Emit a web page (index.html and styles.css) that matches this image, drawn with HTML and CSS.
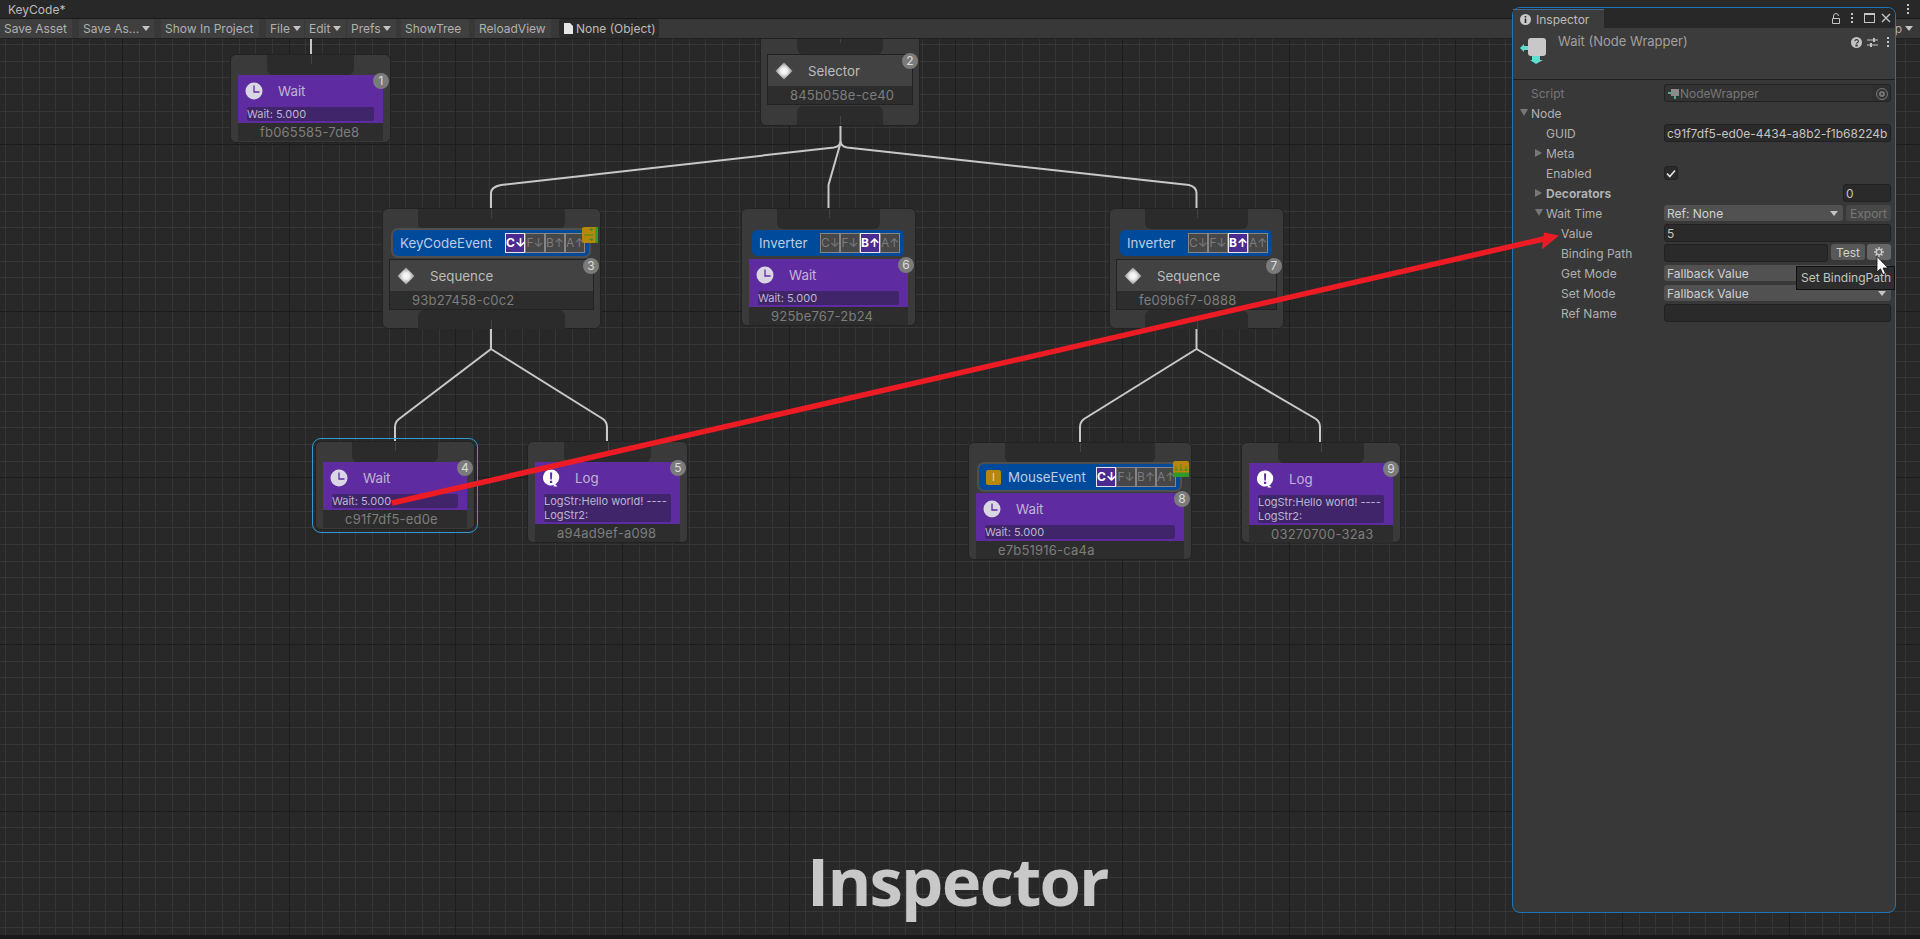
FILE: index.html
```html
<!DOCTYPE html>
<html lang="en">
<head>
    <meta charset="UTF-8">
    <title>KeyCode - Behavior Tree</title>
    <link rel="stylesheet" href="styles.css">
</head>
<body>

    <svg class="defs" xmlns="http://www.w3.org/2000/svg">
        <defs>
            <radialGradient id="diamond-fill">
                <stop offset="0" stop-color="#ffffff"></stop>
                <stop offset=".4" stop-color="#ececec"></stop>
                <stop offset="1" stop-color="#8e8e8e"></stop>
            </radialGradient>
        </defs>
        <symbol id="clock" viewBox="0 0 18 18">
            <circle cx="9" cy="9" r="8.500" fill="#dbd6e4"></circle>
            <path d="M9 3.500V10H14.500" fill="none" stroke="#5e2ca0" stroke-width="1.300"></path>
        </symbol>
        <symbol id="alert" viewBox="0 0 18 18">
            <path d="M9 .5a8 8 0 1 1-1 15.900c-1 0-2-.4-2.800-.9a8 8 0 0 1 3.800-15z M12.500 14.500l3 3h-4z" fill="#fff"></path>
            <path d="M8 3.500h2.200l-.3 7h-1.600z M8 11.800h2.200v2.200h-2.200z" fill="#5e2ca0"></path>
        </symbol>
        <symbol id="diamond" viewBox="0 0 18 18">
            <path d="M9 .5L17.500 9 9 17.500 .5 9z" fill="url(#diamond-fill)"></path>
        </symbol>
        <symbol id="abort-right" viewBox="0 0 16 16">
            <rect width="16" height="16" rx="2" fill="#b8860b"></rect>
            <rect x="13.500" width="2.500" height="16" fill="#2f9a2a"></rect>
            <path d="M7 2.500h4M9 1l2 1.500L9 4M2 8h9M7 12.500h4M9 11l2 1.500L9 14" fill="none" stroke="#3d8f2a" stroke-width="1"></path>
        </symbol>
        <symbol id="abort-down" viewBox="0 0 16 16">
            <rect width="16" height="16" rx="2" fill="#b8860b"></rect>
            <rect y="11.500" width="16" height="4.500" fill="#2f9a2a"></rect>
            <path d="M8 3v7M6.500 8L8 10 9.500 8M3 5v5M1.500 8L3 10 4.500 8M13 5v5M11.500 8L13 10 14.500 8" fill="none" stroke="#3d8f2a" stroke-width="1"></path>
        </symbol>
    </svg>

    <div class="titlebar">
        <span>KeyCode*</span>
        <span class="dots title-dots"><i></i><i></i><i></i></span>
    </div>

    <div class="toolbar">
        <div class="tb-btn save-asset">Save Asset</div>
        <div class="tb-btn save-as">Save As...<span class="caret"></span></div>
        <div class="tb-btn show-project">Show In Project</div>
        <div class="tb-btn file-btn">File<span class="caret"></span></div>
        <div class="tb-btn edit-btn">Edit<span class="caret"></span></div>
        <div class="tb-btn prefs-btn">Prefs<span class="caret"></span></div>
        <div class="tb-btn show-tree">ShowTree</div>
        <div class="tb-btn reload-view">ReloadView</div>
        <div class="tb-object">
            <svg width="9" height="11" viewBox="0 0 9 11"><path d="M0 0H6L9 3V11H0z" fill="#e6e6e6"></path></svg>
            None (Object)
        </div>
        <div class="tb-end">p<span class="caret"></span></div>
    </div>

    <div class="canvas">
        <svg class="wires" xmlns="http://www.w3.org/2000/svg">
            <path d="M311 0V15"></path>
            <path d="M840.500 87V102Q840.500 107 834 108.500L501 146Q491 148 491 154V169"></path>
            <path d="M840.500 102Q840.500 107 847 108.500L1189 146Q1196.500 148 1196.500 154V169"></path>
            <path d="M840.500 104L828.500 146V169"></path>
            <path d="M491 290V310L399 380Q395 383 395 388V402"></path>
            <path d="M491 310L603 380Q607 383 607 388V402"></path>
            <path d="M1196.500 290V310L1084 380Q1080 383 1080 388V403"></path>
            <path d="M1196.500 310L1316 380Q1320 383 1320 388V403"></path>
        </svg>

        <div class="node n1">
            <div class="port"></div>
            <div class="body action">
                <div class="badge">1</div>
                <div class="head"><svg class="ico"><use href="#clock"></use></svg>Wait</div>
                <div class="note">Wait: 5.000</div>
                <div class="guid">fb065585-7de8</div>
            </div>
        </div>

        <div class="node n2">
            <div class="port"></div>
            <div class="body comp">
                <div class="badge">2</div>
                <div class="head"><svg class="ico"><use href="#diamond"></use></svg>Selector</div>
                <div class="guid">845b058e-ce40</div>
            </div>
            <div class="port port-out"></div>
        </div>

        <div class="node n3">
            <div class="port"></div>
            <div class="deco framed">
                <span class="deco-name">KeyCodeEvent</span>
                <div class="keys"><span class="key on">C↓</span><span class="key">F↓</span><span class="key">B↑</span><span class="key">A↑</span></div>
                <svg class="abort"><use href="#abort-right"></use></svg>
            </div>
            <div class="body comp">
                <div class="badge">3</div>
                <div class="head"><svg class="ico"><use href="#diamond"></use></svg>Sequence</div>
                <div class="guid">93b27458-c0c2</div>
            </div>
            <div class="port port-out"></div>
        </div>

        <div class="node n6">
            <div class="port"></div>
            <div class="deco">
                <span class="deco-name">Inverter</span>
                <div class="keys"><span class="key">C↓</span><span class="key">F↓</span><span class="key on">B↑</span><span class="key">A↑</span></div>
            </div>
            <div class="body action">
                <div class="badge">6</div>
                <div class="head"><svg class="ico"><use href="#clock"></use></svg>Wait</div>
                <div class="note">Wait: 5.000</div>
                <div class="guid">925be767-2b24</div>
            </div>
        </div>

        <div class="node n7">
            <div class="port"></div>
            <div class="deco">
                <span class="deco-name">Inverter</span>
                <div class="keys"><span class="key">C↓</span><span class="key">F↓</span><span class="key on">B↑</span><span class="key">A↑</span></div>
            </div>
            <div class="body comp">
                <div class="badge">7</div>
                <div class="head"><svg class="ico"><use href="#diamond"></use></svg>Sequence</div>
                <div class="guid">fe09b6f7-0888</div>
            </div>
            <div class="port port-out"></div>
        </div>

        <div class="node n4">
            <div class="port"></div>
            <div class="body action">
                <div class="badge">4</div>
                <div class="head"><svg class="ico"><use href="#clock"></use></svg>Wait</div>
                <div class="note">Wait: 5.000</div>
                <div class="guid">c91f7df5-ed0e</div>
            </div>
        </div>

        <div class="node n5">
            <div class="port"></div>
            <div class="body action">
                <div class="badge">5</div>
                <div class="head"><svg class="ico"><use href="#alert"></use></svg>Log</div>
                <div class="note">LogStr:Hello world! ----<br>LogStr2:</div>
                <div class="guid">a94ad9ef-a098</div>
            </div>
        </div>

        <div class="node n8">
            <div class="port"></div>
            <div class="deco framed">
                <span class="flag">I</span>
                <span class="deco-name">MouseEvent</span>
                <div class="keys"><span class="key on">C↓</span><span class="key">F↓</span><span class="key">B↑</span><span class="key">A↑</span></div>
                <svg class="abort"><use href="#abort-down"></use></svg>
            </div>
            <div class="body action">
                <div class="badge">8</div>
                <div class="head"><svg class="ico"><use href="#clock"></use></svg>Wait</div>
                <div class="note">Wait: 5.000</div>
                <div class="guid">e7b51916-ca4a</div>
            </div>
        </div>

        <div class="node n9">
            <div class="port"></div>
            <div class="body action">
                <div class="badge">9</div>
                <div class="head"><svg class="ico"><use href="#alert"></use></svg>Log</div>
                <div class="note">LogStr:Hello world! ----<br>LogStr2:</div>
                <div class="guid">03270700-32a3</div>
            </div>
        </div>

        <div class="caption">Inspector</div>
    </div>

    <div class="bottom-strip"></div>

    <div class="inspector">
        <div class="tabs">
            <div class="tab">
                <svg width="11" height="11" viewBox="0 0 11 11"><circle cx="5.500" cy="5.500" r="5.500" fill="#c8c8c8"></circle><path d="M4.700 2h1.600v1.500H4.700zM4.700 4.500h1.600V9H4.700z" fill="#282828"></path></svg>
                Inspector
            </div>
            <div class="tab-tools">
                <svg class="lock-ico" width="10" height="11" viewBox="0 0 10 11"><path d="M1.500 5.500V3a2.500 2.500 0 0 1 5 0M.5 5.500h7v5h-7z" fill="none" stroke="#c4c4c4"></path></svg>
                <span class="dots tab-dots"><i></i><i></i><i></i></span>
                <span class="max-ico"></span>
                <svg width="10" height="10" viewBox="0 0 10 10"><path d="M1 1L9 9M9 1L1 9" stroke="#c4c4c4" stroke-width="1.400"></path></svg>
            </div>
        </div>

        <div class="insp-head">
            <svg class="insp-ico" width="28" height="27" viewBox="0 0 28 27">
                <path d="M0 11L4 7V9H9V13H4V15z" fill="#5fe0cf"></path>
                <path d="M12 19H20V23H23L16 27 10 23H12z" fill="#5fe0cf"></path>
                <rect x="8" y="1" width="18" height="18" rx="3" fill="#c8c8c8"></rect>
            </svg>
            <span class="insp-title">Wait (Node Wrapper)</span>
            <div class="insp-tools">
                <svg width="11" height="11" viewBox="0 0 11 11"><circle cx="5.500" cy="5.500" r="5.500" fill="#c4c4c4"></circle><path d="M3.800 4.200a1.800 1.600 0 1 1 2.500 1.500c-.6.300-.8.500-.8 1.100M5 8h1.100v1H5z" fill="none" stroke="#383838" stroke-width="1.100"></path></svg>
                <svg width="11" height="11" viewBox="0 0 11 11"><path d="M0 3h11M0 8h11" stroke="#c4c4c4"></path><rect x="6" y="1" width="2" height="4" fill="#c4c4c4"></rect><rect x="3" y="6" width="2" height="4" fill="#c4c4c4"></rect></svg>
                <span class="dots head-dots"><i></i><i></i><i></i></span>
            </div>
        </div>

        <div class="rows">
            <div class="row">
                <div class="label lv0 dim">Script</div>
                <div class="field dim script-field">
                    <svg width="11" height="11" viewBox="0 0 11 11"><rect x="3" y="1" width="8" height="7" fill="#8a8a8a"></rect><path d="M0 4h3v2H0zM6 8h2v3H6z" fill="#4fa89a"></path></svg>
                    NodeWrapper
                    <span class="picker"></span>
                </div>
            </div>
            <div class="row">
                <div class="label lv-fold0"><span class="fold open"></span>Node</div>
            </div>
            <div class="row">
                <div class="label lv1">GUID</div>
                <div class="field">c91f7df5-ed0e-4434-a8b2-f1b68224b</div>
            </div>
            <div class="row">
                <div class="label lv-fold1"><span class="fold closed"></span>Meta</div>
            </div>
            <div class="row">
                <div class="label lv1">Enabled</div>
                <div class="check">
                    <svg width="10" height="9" viewBox="0 0 10 9"><path d="M1 4.500L3.800 7.500 9 1.500" fill="none" stroke="#e4e4e4" stroke-width="1.600"></path></svg>
                </div>
            </div>
            <div class="row">
                <div class="label lv-fold1"><span class="fold closed"></span><b>Decorators</b></div>
                <div class="value-end"><div class="field count">0</div></div>
            </div>
            <div class="row">
                <div class="label lv-fold1"><span class="fold open"></span>Wait Time</div>
                <div class="value-split">
                    <div class="drop ref-drop">Ref: None<span class="caret"></span></div>
                    <div class="btn disabled">Export</div>
                </div>
            </div>
            <div class="row">
                <div class="label lv2">Value</div>
                <div class="field">5</div>
            </div>
            <div class="row">
                <div class="label lv2">Binding Path</div>
                <div class="value-split">
                    <div class="field binding"></div>
                    <div class="btn test-btn">Test</div>
                    <div class="btn gear-btn">
                        <svg width="10" height="10" viewBox="0 0 12 12"><circle cx="6" cy="6" r="3.200" fill="none" stroke="#c8c8c8" stroke-width="1.600"></circle><path d="M6 0V2.500M6 9.500V12M0 6H2.500M9.500 6H12M1.800 1.800L3.500 3.500M8.500 8.500L10.200 10.200M1.800 10.200L3.500 8.500M8.500 3.500L10.200 1.800" stroke="#c8c8c8" stroke-width="1.700"></path></svg>
                    </div>
                </div>
            </div>
            <div class="row">
                <div class="label lv2">Get Mode</div>
                <div class="drop">Fallback Value<span class="caret"></span></div>
            </div>
            <div class="row">
                <div class="label lv2">Set Mode</div>
                <div class="drop">Fallback Value<span class="caret"></span></div>
            </div>
            <div class="row">
                <div class="label lv2">Ref Name</div>
                <div class="field"></div>
            </div>
        </div>

        <div class="tooltip">Set BindingPath</div>
    </div>

    <svg class="overlay" xmlns="http://www.w3.org/2000/svg">
        <path class="arrow-line" d="M392 503L1548 238"></path>
        <path class="arrow-head" d="M1559 235.500L1544 232.500 1542 249.500z"></path>
        <path class="cursor" d="M1877 256.500V272L1880.500 268.800 1883 274.500 1885.500 273.300 1883 268H1888z"></path>
    </svg>

</body>
</html>
```

FILE: styles.css
```css
* {
    margin: 0;
    padding: 0;
    box-sizing: border-box;
}

body {
    display: flex;
    flex-direction: column;
    height: 939px;
    overflow: hidden;
    position: relative;
    background: #282828;
    font-family: Inter, "Liberation Sans", sans-serif;
    font-size: 12px;
    color: #b0b0b0;
}

.defs {
    position: absolute;
    width: 0;
    height: 0;
}

/* top bars */
.titlebar {
    height: 19px;
    flex-shrink: 0;
    display: flex;
    align-items: center;
    justify-content: space-between;
    padding: 0 11px 0 8px;
    background: #282828;
    border-bottom: 1px solid #1a1a1a;
    color: #bcbcbc;
}

.toolbar {
    height: 20px;
    flex-shrink: 0;
    display: flex;
    background: #383838;
    border-bottom: 1px solid #1f1f1f;
}

.tb-btn {
    display: flex;
    align-items: center;
    background: #3f3f3f;
    padding-left: 4px;
    white-space: nowrap;
}

.save-asset { width: 72px; }
.save-as { width: 75px; margin-left: 7px; }
.show-project { width: 98px; margin-left: 7px; }
.file-btn { width: 38px; margin-left: 7px; }
.edit-btn { width: 41px; margin-left: 1px; }
.prefs-btn { width: 49px; margin-left: 1px; }
.show-tree { width: 68px; margin-left: 5px; }
.reload-view { width: 76px; margin-left: 6px; }

.tb-object {
    display: flex;
    align-items: center;
    gap: 3px;
    width: 100px;
    height: 19px;
    margin-left: 8px;
    padding-left: 5px;
    background: #2a2a2a;
    border-radius: 3px;
    color: #bcbcbc;
    white-space: nowrap;
}

.tb-end {
    display: flex;
    align-items: center;
    margin-left: auto;
    padding-right: 7px;
}

.caret {
    width: 0;
    height: 0;
    margin-left: 3px;
    border-left: 4px solid transparent;
    border-right: 4px solid transparent;
    border-top: 5px solid #c4c4c4;
}

.dots {
    display: inline-flex;
    flex-direction: column;
    gap: 2px;
}

.dots i {
    width: 2px;
    height: 2px;
    background: #c4c4c4;
}

/* graph canvas */
.canvas {
    flex: 1;
    position: relative;
    overflow: hidden;
    background-color: #282828;
    background-image:
        repeating-linear-gradient(90deg, transparent 0 122px, #1d1d1d 122px 123px, transparent 123px 166.670px),
        repeating-linear-gradient(180deg, transparent 0 105px, #1d1d1d 105px 106px, transparent 106px 166.670px),
        repeating-linear-gradient(90deg, transparent 0 5.330px, #363636 5.330px 6.330px, transparent 6.330px 16.667px),
        repeating-linear-gradient(180deg, transparent 0 5px, #363636 5px 6px, transparent 6px 16.667px);
}

.bottom-strip {
    height: 4px;
    flex-shrink: 0;
    background: #191919;
}

.wires {
    position: absolute;
    left: 0;
    top: 0;
    width: 1500px;
    height: 500px;
}

.wires path {
    fill: none;
    stroke: #c8c8c8;
    stroke-width: 2;
}

.caption {
    position: absolute;
    left: 807px;
    top: 801px;
    font-family: "Open Sans", sans-serif;
    font-size: 67px;
    font-weight: 700;
    letter-spacing: -1.800px;
    line-height: 80px;
    color: #c8c8c8;
}

/* behavior tree nodes */
.node {
    position: absolute;
    display: flex;
    flex-direction: column;
    align-items: center;
    background: #3a3a3a;
    border: 1px solid #222;
    border-radius: 6px;
}

.n1 { left: 230px; top: 15px; width: 161px; height: 89px; }
.n2 { left: 760px; top: -6px; width: 160px; height: 93px; }
.n3 { left: 382px; top: 169px; width: 219px; height: 121px; }
.n4 { left: 315px; top: 402px; width: 160px; height: 89px; outline: 1.500px solid #2f9bd6; outline-offset: 2px; }
.n5 { left: 527px; top: 402px; width: 161px; height: 102px; }
.n6 { left: 741px; top: 169px; width: 175px; height: 118px; }
.n7 { left: 1109px; top: 169px; width: 175px; height: 121px; }
.n8 { left: 968px; top: 403px; width: 224px; height: 118px; }
.n9 { left: 1241px; top: 403px; width: 160px; height: 101px; }

.port {
    position: relative;
    flex-shrink: 0;
    width: 55%;
    height: 20px;
    background: #2b2b2b;
    border-radius: 0 0 6px 6px;
}

.port::after {
    content: "";
    position: absolute;
    left: 50%;
    top: 0;
    width: 1px;
    height: 9px;
    background: #444;
}

.n3 .port { width: 68%; }
.n8 .port { width: 68%; }
.n6 .port, .n7 .port { width: 59%; }

.port-out {
    margin-top: auto;
    border-radius: 6px 6px 0 0;
    height: 19px;
}

.port-out::after {
    top: auto;
    bottom: 0;
}

.body {
    position: relative;
    align-self: stretch;
    margin: 0 7px;
    display: flex;
    flex-direction: column;
}

.action { background: #5e2ca0; }
.comp {
    margin: 0 6px;
    background: #424242;
    border: 1px solid #222;
}

.head {
    display: flex;
    align-items: center;
    flex-shrink: 0;
    height: 32px;
    padding-left: 7px;
    gap: 15px;
    font-size: 13.300px;
    color: #c0b4d6;
}

.comp .head {
    height: 31px;
    color: #bcbcbc;
}

.ico {
    width: 18px;
    height: 18px;
}

.note {
    margin: 0 9px 2px;
    background: #40256b;
    border-radius: 2px;
    font-size: 11px;
    line-height: 14px;
    color: #bdb5cf;
    white-space: nowrap;
}

.guid {
    flex: 1;
    padding-left: 22px;
    background: #2d2d2d;
    font-size: 13px;
    line-height: 18px;
    letter-spacing: .2px;
    color: #7d7d7d;
    white-space: nowrap;
}

.badge {
    position: absolute;
    right: -6px;
    top: -2px;
    width: 16px;
    height: 16px;
    border-radius: 50%;
    background: #7b7b7b;
    color: #ddd;
    font-size: 12px;
    line-height: 16px;
    text-align: center;
}

/* decorators */
.deco {
    position: relative;
    flex-shrink: 0;
    align-self: stretch;
    display: flex;
    align-items: center;
    height: 26px;
    margin: 1px 11px 0 10px;
    padding: 0 4px 0 7px;
    background: #004a9c;
    border-radius: 5px;
    font-size: 13.300px;
    color: #bccce4;
}

.framed {
    box-shadow: 0 0 0 2px #4f4f4f;
}

.deco + .body { margin-top: 3px; }

.keys {
    display: flex;
    margin-left: auto;
}

.key {
    width: 20px;
    height: 20px;
    background: #474747;
    border: 1px solid #858585;
    font-size: 12px;
    line-height: 18px;
    text-align: center;
    white-space: nowrap;
    color: #7c7c7c;
}

.key.on {
    background: #4b2a92;
    border-color: #e8e8e8;
    color: #fff;
    font-weight: 700;
}

.abort {
    position: absolute;
    right: -9px;
    top: -3px;
    width: 16px;
    height: 16px;
}

.flag {
    width: 15px;
    height: 15px;
    margin-right: 7px;
    background: #b8860b;
    border-radius: 2px;
    color: #e8d8a8;
    font-size: 11px;
    line-height: 15px;
    text-align: center;
}

/* floating inspector window */
.inspector {
    position: absolute;
    left: 1512px;
    top: 7px;
    width: 384px;
    height: 906px;
    background: #383838;
    border: 1.500px solid #1b77bd;
    border-radius: 8px;
}

.tabs {
    display: flex;
    align-items: center;
    height: 20px;
    background: #282828;
    border-radius: 7px 7px 0 0;
}

.tab {
    display: flex;
    align-items: center;
    align-self: flex-end;
    gap: 5px;
    width: 91px;
    height: 19px;
    padding-left: 7px;
    background: #3c3c3c;
    border-top: 1px solid #3f6a94;
    color: #bcbcbc;
}

.tab-tools {
    display: flex;
    align-items: center;
    gap: 6px;
    margin-left: auto;
    padding-right: 4px;
}

.lock-ico { margin-right: 3px; }
.tab-dots { margin-right: 5px; }

.max-ico {
    width: 11px;
    height: 10px;
    border: 1px solid #c4c4c4;
    border-top-width: 2px;
}

.insp-head {
    display: flex;
    height: 52px;
    padding: 0 6px 0 7px;
    background: #3c3c3c;
    border-bottom: 1px solid #1f1f1f;
}

.insp-ico {
    margin-top: 9px;
    flex-shrink: 0;
}

.insp-title {
    margin: 4px 0 0 10px;
    font-size: 13px;
    line-height: 18px;
    color: #a0a0a0;
}

.insp-tools {
    display: flex;
    align-items: center;
    align-self: flex-start;
    gap: 5px;
    height: 18px;
    margin: 5px 0 0 auto;
}

.head-dots { margin-left: 4px; }

.rows {
    padding-top: 3px;
}

.row {
    display: grid;
    grid-template-columns: 151px 1fr;
    align-items: center;
    height: 20px;
    padding-right: 4px;
}

.label {
    display: flex;
    align-items: center;
    white-space: nowrap;
}

.lv0 { padding-left: 18px; }
.lv1 { padding-left: 33px; }
.lv2 { padding-left: 48px; }
.lv-fold0 { padding-left: 7px; }
.lv-fold1 { padding-left: 22px; }
.dim { color: #777; }

.fold {
    flex-shrink: 0;
    width: 11px;
    height: 8px;
}

.fold.open {
    width: 0;
    margin-right: 3px;
    border-left: 4px solid transparent;
    border-right: 4px solid transparent;
    border-top: 7px solid #777;
}

.fold.closed {
    width: 0;
    margin-right: 4px;
    border-top: 4px solid transparent;
    border-bottom: 4px solid transparent;
    border-left: 7px solid #777;
}

.field {
    display: flex;
    align-items: center;
    height: 18px;
    padding: 0 2px;
    background: #2a2a2a;
    border: 1px solid #212121;
    border-radius: 3px;
    color: #c4c4c4;
    white-space: nowrap;
    overflow: hidden;
}

.script-field {
    gap: 1px;
    padding-right: 0;
    padding-left: 3px;
    background: #333;
    color: #777;
}

.picker {
    width: 18px;
    height: 16px;
    margin-left: auto;
    background: #303030;
}

.picker::after {
    content: "";
    display: block;
    width: 10px;
    height: 10px;
    margin: 3px 4px;
    border: 1px solid #777;
    border-radius: 50%;
    box-shadow: inset 0 0 0 2px #303030, inset 0 0 0 4px #777;
}

.check {
    display: flex;
    align-items: center;
    justify-content: center;
    width: 14px;
    height: 14px;
    background: #2a2a2a;
    border: 1px solid #212121;
    border-radius: 3px;
}

.value-end {
    display: flex;
    justify-content: flex-end;
}

.count { width: 48px; }

.value-split {
    display: flex;
    gap: 3px;
}

.drop {
    display: flex;
    align-items: center;
    justify-content: space-between;
    height: 16px;
    padding: 0 5px 0 3px;
    background: #515151;
    border-radius: 3px;
    color: #d0d0d0;
    white-space: nowrap;
}

.ref-drop { flex: 1; }

.btn {
    display: flex;
    align-items: center;
    justify-content: center;
    height: 16px;
    background: #585858;
    border-radius: 3px;
    color: #d0d0d0;
}

.disabled {
    width: 45px;
    background: #474747;
    color: #777;
}

.binding { flex: 1; }
.test-btn { width: 34px; margin-right: -1px; }

.gear-btn {
    width: 24px;
    background: #676767;
}

.tooltip {
    position: absolute;
    left: 283px;
    top: 258px;
    width: 99px;
    height: 24px;
    padding-left: 4px;
    background: #2d2d2d;
    border: 1px solid #111;
    color: #c4c4c4;
    line-height: 22px;
    white-space: nowrap;
}

/* annotation drawn over everything */
.overlay {
    position: absolute;
    left: 0;
    top: 0;
    width: 1920px;
    height: 939px;
    pointer-events: none;
}

.arrow-line {
    fill: none;
    stroke: #ed1c24;
    stroke-width: 5.500;
}

.arrow-head { fill: #ed1c24; }

.cursor {
    fill: #fff;
    stroke: #111;
    stroke-width: .8;
}
```
